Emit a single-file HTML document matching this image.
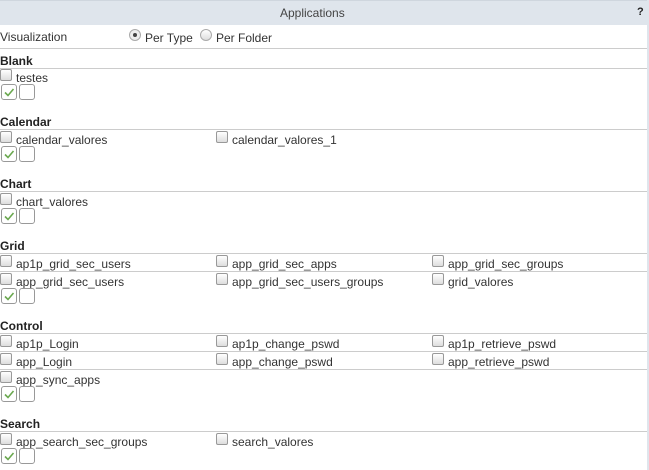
<!DOCTYPE html><html><head><style>
body{margin:0;width:649px;height:470px;position:relative;font-family:"Liberation Sans",sans-serif;font-size:12px;color:#333;background:#fff;overflow:hidden}
.a{position:absolute;white-space:nowrap}
.hd{position:absolute;left:0;top:0;width:647px;height:25px;background:#dfe5ec;border-top:1px solid #cfd6de;box-sizing:border-box}
.rb{position:absolute;left:647px;top:0;width:2px;height:470px;background:#dfe5ec}
.ln{position:absolute;left:0;width:647px;height:1px;background:#ccc}
.b{font-weight:bold;color:#222}
.cb{position:absolute;width:12px;height:12px;border:1px solid #999;border-radius:2px;background:linear-gradient(#fff,#ddd);box-sizing:border-box}
.bx{position:absolute;width:16px;height:16px;border:1px solid #999;border-radius:3px;box-sizing:border-box;background:#fff}
</style></head><body>
<div class="hd"></div><div class="rb"></div>
<div class="a" style="left:280px;top:6px;color:#444">Applications</div>
<div class="a b" style="left:637px;top:6px;font-size:11px">?</div>
<div class="a" style="left:0;top:30px">Visualization</div>
<div class="a" style="left:129px;top:29px;width:12px;height:12px;border:1px solid #aaa;border-radius:50%;box-sizing:border-box;background:#eee"><div style="position:absolute;left:3px;top:3px;width:4px;height:4px;border-radius:50%;background:#444"></div></div>
<div class="a" style="left:145px;top:31px">Per Type</div>
<div class="a" style="left:200px;top:29px;width:12px;height:12px;border:1px solid #aaa;border-radius:50%;box-sizing:border-box;background:linear-gradient(#fff,#ddd)"></div>
<div class="a" style="left:216px;top:31px">Per Folder</div>
<div class="ln" style="top:48px"></div>
<div id="c"></div>
<script>
var html='';
function chk(y){html+='<div class="bx" style="left:1px;top:'+y+'px"><svg width="14" height="14" style="position:absolute;left:0;top:0"><path d="M3 7.5L6 10.5L11.5 4" stroke="#6aa84f" stroke-width="1.6" fill="none"/></svg></div><div class="bx" style="left:19px;top:'+y+'px"></div>';}
function hdr(y,t){html+='<div class="a b" style="left:0;top:'+(y-6)+'px">'+t+'</div><div class="ln" style="top:'+(y+8)+'px"></div>';}
function row(y,items,line){items.forEach(function(t,i){var x=i*216;html+='<div class="cb" style="left:'+x+'px;top:'+(y-8)+'px"></div><div class="a" style="left:'+(x+16)+'px;top:'+(y-6)+'px">'+t+'</div>';});if(line)html+='<div class="ln" style="top:'+(y+8)+'px"></div>';}
hdr(60,'Blank');row(77,['testes']);chk(84);
hdr(121,'Calendar');row(139,['calendar_valores','calendar_valores_1']);chk(146);
hdr(183,'Chart');row(201,['chart_valores']);chk(208);
hdr(245,'Grid');row(263,['ap1p_grid_sec_users','app_grid_sec_apps','app_grid_sec_groups'],1);row(281,['app_grid_sec_users','app_grid_sec_users_groups','grid_valores']);chk(288);
hdr(325,'Control');row(343,['ap1p_Login','ap1p_change_pswd','ap1p_retrieve_pswd'],1);row(361,['app_Login','app_change_pswd','app_retrieve_pswd'],1);row(379,['app_sync_apps']);chk(386);
hdr(423,'Search');row(441,['app_search_sec_groups','search_valores']);chk(448);
document.getElementById('c').innerHTML=html;
</script>
</body></html>
